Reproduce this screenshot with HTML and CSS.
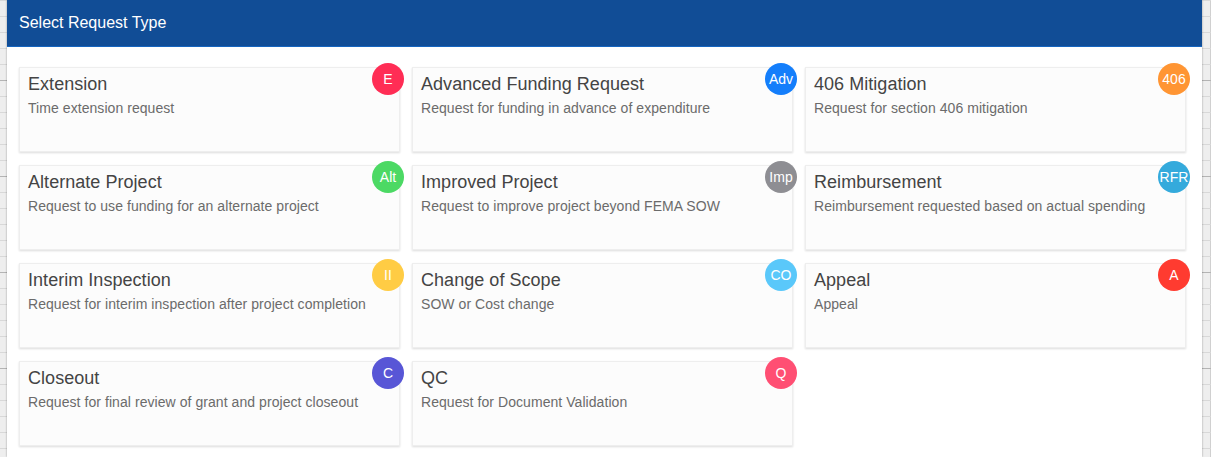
FILE: index.html
```html
<!DOCTYPE html>
<html lang="en">
<head>
  <meta charset="UTF-8">
  <title>Select Request Type</title>
  <link rel="stylesheet" href="styles.css">
</head>
<body>
  <div class="modal">
    <div class="modal-header">Select Request Type</div>
    <div class="modal-body">
      <div class="card">
        <span class="badge badge-e">E</span>
        <h3>Extension</h3>
        <p>Time extension request</p>
      </div>
      <div class="card">
        <span class="badge badge-adv">Adv</span>
        <h3>Advanced Funding Request</h3>
        <p>Request for funding in advance of expenditure</p>
      </div>
      <div class="card">
        <span class="badge badge-406">406</span>
        <h3>406 Mitigation</h3>
        <p>Request for section 406 mitigation</p>
      </div>
      <div class="card">
        <span class="badge badge-alt">Alt</span>
        <h3>Alternate Project</h3>
        <p>Request to use funding for an alternate project</p>
      </div>
      <div class="card">
        <span class="badge badge-imp">Imp</span>
        <h3>Improved Project</h3>
        <p>Request to improve project beyond FEMA SOW</p>
      </div>
      <div class="card">
        <span class="badge badge-rfr">RFR</span>
        <h3>Reimbursement</h3>
        <p>Reimbursement requested based on actual spending</p>
      </div>
      <div class="card">
        <span class="badge badge-ii">II</span>
        <h3>Interim Inspection</h3>
        <p>Request for interim inspection after project completion</p>
      </div>
      <div class="card">
        <span class="badge badge-co">CO</span>
        <h3>Change of Scope</h3>
        <p>SOW or Cost change</p>
      </div>
      <div class="card">
        <span class="badge badge-a">A</span>
        <h3>Appeal</h3>
        <p>Appeal</p>
      </div>
      <div class="card">
        <span class="badge badge-c">C</span>
        <h3>Closeout</h3>
        <p>Request for final review of grant and project closeout</p>
      </div>
      <div class="card">
        <span class="badge badge-q">Q</span>
        <h3>QC</h3>
        <p>Request for Document Validation</p>
      </div>
    </div>
  </div>
</body>
</html>
```

FILE: styles.css
```css
* {
  margin: 0;
  padding: 0;
  box-sizing: border-box;
}
html, body {
  height: 100%;
  overflow: hidden;
}
/* spreadsheet grid showing behind the modal */
body {
  font-family: "Liberation Sans", Arial, sans-serif;
  background-color: #eeeeee;
  background-image:
    linear-gradient(#b4b4b4 1px, transparent 1px),
    linear-gradient(#d8d8d8 1px, transparent 1px),
    linear-gradient(90deg, transparent 1210px, #d0d0d0 1210px);
  background-size: 100% 96px, 100% 16px, 100% 100%;
  background-position: 0 80px, 0 0, 0 0;
  padding: 0 9px 0 7px;
}
.modal {
  height: 100%;
  background: #fff;
  box-shadow: 0 0 2px rgba(0,0,0,0.35);
}
.modal-header {
  height: 47px;
  padding-left: 12px;
  line-height: 46px;
  font-size: 16px;
  color: #fff;
  background: #114d96;
  border-bottom: 1px solid #1565c0;
}
.modal-body {
  display: grid;
  grid-template-columns: repeat(3, 381px);
  grid-auto-rows: 85px;
  column-gap: 12px;
  row-gap: 13px;
  padding: 20px 0 0 12px;
}
.card {
  position: relative;
  padding: 6px 8px;
  background: #fcfcfc;
  border: 1px solid #eee;
  box-shadow: 0 1px 2px rgba(0,0,0,0.14);
}
.card h3 {
  font-size: 18px;
  font-weight: normal;
  line-height: 20px;
  letter-spacing: 0.04px;
  color: #444;
}
.card p {
  margin-top: 5px;
  font-size: 14px;
  line-height: 18px;
  letter-spacing: 0.06px;
  color: #6b6b6b;
}
.badge {
  position: absolute;
  top: -5px;
  right: -5px;
  width: 32px;
  height: 32px;
  border-radius: 50%;
  font-size: 14px;
  line-height: 32px;
  text-align: center;
  color: #fff;
}
.badge-e { background: #ff2d55; }
.badge-adv { background: #147efb; }
.badge-406 { background: #ff9533; }
.badge-alt { background: #4cd964; }
.badge-imp { background: #8e8e93; }
.badge-rfr { background: #34aadc; }
.badge-ii { background: #ffcc44; }
.badge-co { background: #5ac8fa; }
.badge-a { background: #ff3b30; }
.badge-c { background: #5856d6; }
.badge-q { background: #ff4f73; }
```
